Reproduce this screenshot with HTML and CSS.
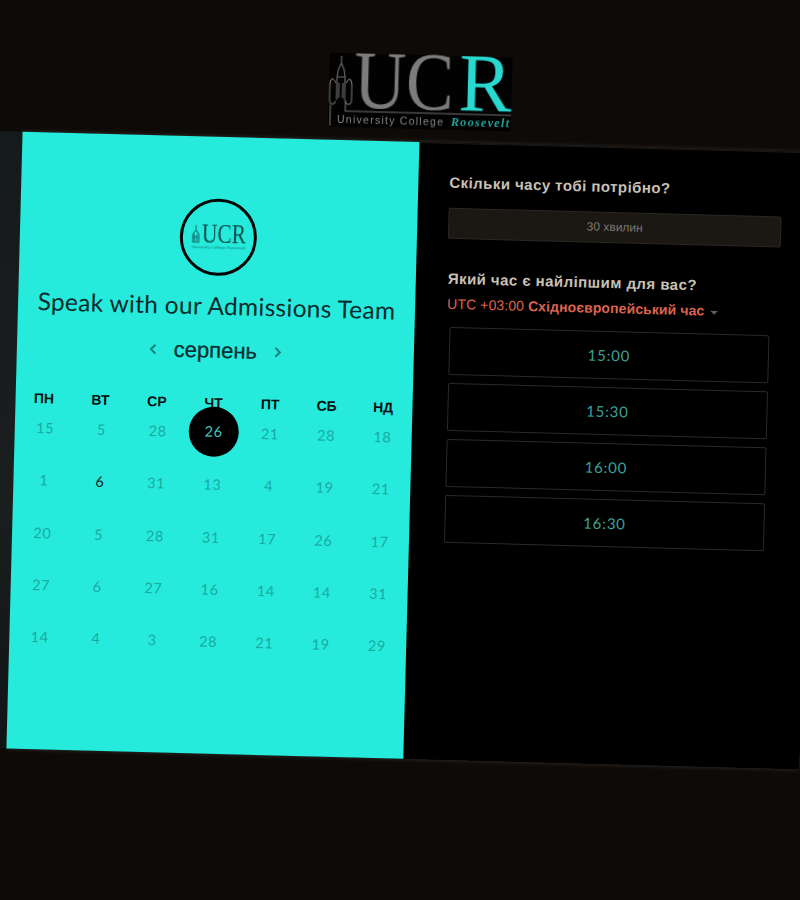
FILE: index.html
```html
<!DOCTYPE html>
<html lang="uk">
<head>
<meta charset="utf-8">
<title>Speak with our Admissions Team</title>
<link rel="stylesheet" href="styles.css">
</head>
<body>
<div class="stage">
  <header class="top">
    <svg class="logo" width="183" height="74" viewBox="0 0 183 74">
      <rect width="183" height="74" fill="#020202"/>
      <g fill="none" stroke="#6f6f6d" stroke-width="1.1">
        <path d="M12 3V10L9 17L8 24V47M12 10L15 17L16 24V47M8 24H16M10 30V45M14 30V45"/>
        <path d="M7 30C3 22 1 28 1 33V47C1 52 6 53 7 48M17 30C21 22 23 28 23 33V47C23 52 18 53 17 48"/>
        <path d="M2 52V73M17 47V58H183"/>
      </g>
      <text class="logo-big" x="25" y="54" fill="#7c7c7a" textLength="100" lengthAdjust="spacingAndGlyphs">UC</text>
      <text class="logo-big" x="130" y="54" fill="#29d8cf" textLength="53" lengthAdjust="spacingAndGlyphs">R</text>
      <text class="logo-small" x="9" y="70" fill="#84847f" textLength="107">University College</text>
      <text class="logo-script" x="123" y="69.5" fill="#22a79f" textLength="58">Roosevelt</text>
    </svg>
  </header>
  <main class="card">
    <section class="left">
      <div class="badge">
        <svg class="badge-art" width="60" height="34" viewBox="0 0 60 34">
          <g fill="none" stroke="#127f7b" stroke-width="1.2"><path d="M7 5V10M7 10L4 14V22H10V14ZM3 17H10M5.5 14V22M8 14V22"/></g>
          <text class="badge-big" x="13" y="22" fill="#0a4a49" textLength="44" lengthAdjust="spacingAndGlyphs">UCR</text>
          <text class="badge-small" x="3" y="28" fill="#127f7b" textLength="54" lengthAdjust="spacingAndGlyphs">University College Roosevelt</text>
        </svg>
      </div>
      <h1 class="title">Speak with our Admissions Team</h1>
      <div class="month">
        <svg class="chev" width="8" height="12" viewBox="0 0 8 12"><path d="M6.5 1.5L2 6L6.5 10.5" fill="none" stroke="#138079" stroke-width="2"/></svg>
        <span class="month-name">серпень</span>
        <svg class="chev" width="8" height="12" viewBox="0 0 8 12"><path d="M1.5 1.5L6 6L1.5 10.5" fill="none" stroke="#138079" stroke-width="2"/></svg>
      </div>
      <div class="week">
        <span>ПН</span><span>ВТ</span><span>СР</span><span>ЧТ</span><span>ПТ</span><span>СБ</span><span>НД</span>
      </div>
      <div class="days">
        <span>15</span><span>5</span><span>28</span><span class="sel">26</span><span>21</span><span>28</span><span>18</span>
        <span>1</span><span class="on">6</span><span>31</span><span>13</span><span>4</span><span>19</span><span>21</span>
        <span>20</span><span>5</span><span>28</span><span>31</span><span>17</span><span>26</span><span>17</span>
        <span>27</span><span>6</span><span>27</span><span>16</span><span>14</span><span>14</span><span>31</span>
        <span>14</span><span>4</span><span>3</span><span>28</span><span>21</span><span>19</span><span>29</span>
      </div>
    </section>
    <section class="right">
      <h2 class="q q-first">Скільки часу тобі потрібно?</h2>
      <div class="duration">30 хвилин</div>
      <h2 class="q q-second">Який час є найліпшим для вас?</h2>
      <div class="tz"><span>UTC +03:00</span> <b>Східноєвропейський час</b><i class="caret"></i></div>
      <div class="slots">
        <div class="slot">15:00</div>
        <div class="slot">15:30</div>
        <div class="slot">16:00</div>
        <div class="slot">16:30</div>
      </div>
    </section>
  </main>
</div>
</body>
</html>
```
FILE: styles.css
```css
html, body { margin: 0; height: 100%; }
body { background: #0d0a07; overflow: hidden; font-family: "Liberation Sans", Arial, sans-serif; }
.stage { width: 830px; height: 900px; padding-left: 26px; box-sizing: border-box; transform: rotate(1.5deg); transform-origin: 0 0; }
.top { height: 131px; padding-top: 44px; padding-left: 305px; box-sizing: border-box; }
.logo { display: block; overflow: visible; filter: blur(.35px); }
.logo-big { font-family: "Liberation Serif", serif; font-size: 82px; }
.logo-small { font-family: "Liberation Sans", sans-serif; font-size: 10.5px; letter-spacing: 1px; }
.logo-script { font-family: "Liberation Serif", serif; font-style: italic; font-weight: 700; font-size: 12px; }
.card { position: relative; display: flex; width: 793px; height: 617px; box-shadow: 0 0 5px rgba(255,255,255,.16); }
.card::before { content: ""; position: absolute; left: -30px; width: 30px; top: 0; bottom: 0; background: linear-gradient(#151a1a, #1b1e1e 60%, #111414); }
.left { position: relative; width: 397px; background: #26ebdc; padding-top: 62px; box-sizing: border-box; display: flex; flex-direction: column; align-items: center; }
.badge { width: 77px; height: 77px; box-sizing: border-box; border: 3px solid #050505; border-radius: 50%; display: flex; align-items: center; justify-content: center; }
.badge-art { overflow: visible; filter: blur(.25px); }
.badge-big { font-family: "Liberation Serif", serif; font-size: 27px; }
.badge-small { font-family: "Liberation Sans", sans-serif; font-size: 4px; }
.title { margin: 12.5px 0 0; font: 400 24.5px/34px Lato, sans-serif; color: #0b2a2b; letter-spacing: .3px; white-space: nowrap; }
.month { margin-top: 12px; height: 32px; display: flex; align-items: center; gap: 17px; }
.month-name { font-size: 22px; color: #0c2f30; -webkit-text-stroke: .3px #0c2f30; }
.chev { display: block; }
.week { width: 100%; box-sizing: border-box; padding-right: 1px; margin-top: 28px; display: grid; grid-template-columns: repeat(7, 1fr); text-align: center; font-weight: 700; font-size: 14px; line-height: 16px; color: #04100f; }
.days { width: 100%; box-sizing: border-box; padding: 0 1.3px 0 2.3px; margin-top: 11.5px; display: grid; grid-template-columns: repeat(7, 1fr); grid-auto-rows: 52.3px; font: 400 14.5px/22px Lato, sans-serif; letter-spacing: .6px; color: #19aaa2; text-align: center; }
.days span { display: block; position: relative; }
.days .on { color: #04201f; }
.days .sel { color: #4cc3ba; z-index: 0; top: -1.5px; }
.days .sel::before { content: ""; position: absolute; z-index: -1; left: 50%; top: 11px; width: 50px; height: 50px; margin: -25px 0 0 -25px; background: #000; border-radius: 50%; }
.right { flex: 1; background: #000; box-sizing: border-box; padding: 30px 32px 0 31px; border-top: 1px solid #1c1a17; color: #c9c1b5; }
.q { margin: 0; font-size: 15px; line-height: 18px; font-weight: 700; letter-spacing: .45px; color: #c9c1b5; }
.duration { margin-top: 16px; height: 31px; box-sizing: border-box; border: 1px solid #2b2823; border-radius: 2px; background: #1b1712; font-size: 12px; line-height: 29px; text-align: center; color: #7f786e; }
.q-second { margin-top: 31px; padding-left: 1px; }
.tz { margin-top: 7px; padding-left: 1px; font-size: 14px; line-height: 18px; color: #dc6350; white-space: nowrap; letter-spacing: .1px; }
.tz b { font-size: 14px; }
.caret { display: inline-block; margin-left: 6px; vertical-align: 1px; border: 4px solid transparent; border-top-color: #5e5952; border-bottom: 0; }
.slots { margin-top: 14px; margin-left: 4px; width: 320px; display: flex; flex-direction: column; gap: 8px; }
.slot { height: 48px; box-sizing: border-box; border: 1px solid #2d2a25; border-radius: 2px; font: 400 15px/46px Lato, sans-serif; letter-spacing: .8px; text-align: center; color: #3da097; }
```
